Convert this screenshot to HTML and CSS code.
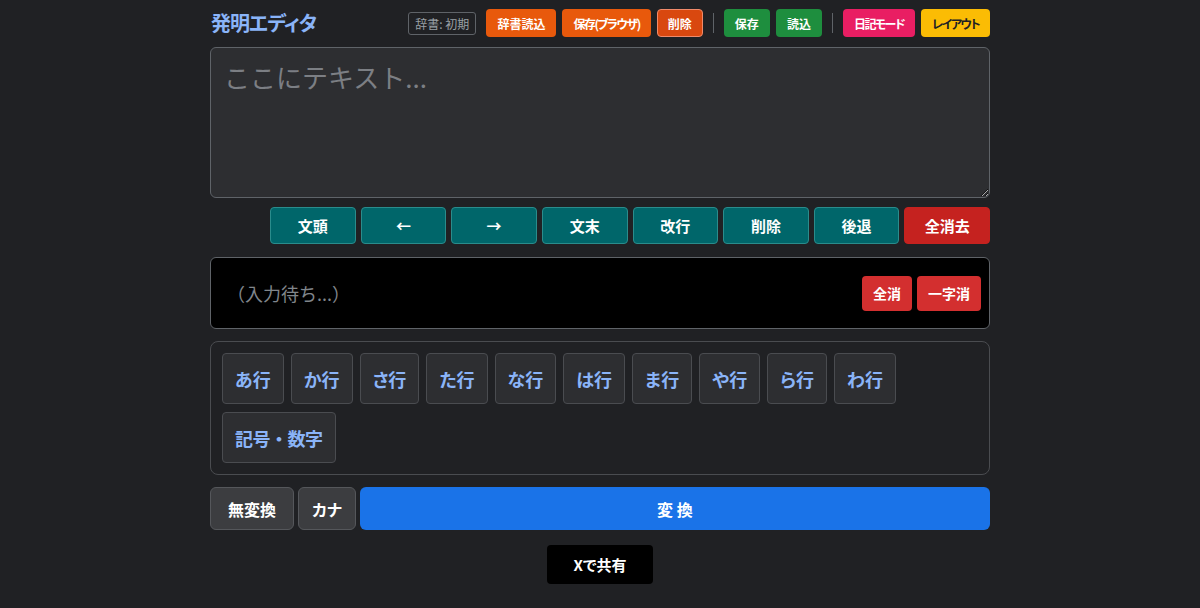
FILE: index.html
```html
<!DOCTYPE html>
<html lang="ja">
<head>
    <meta charset="UTF-8">
    <meta name="viewport" content="width=device-width, initial-scale=1.0">
    <title>発明エディタ</title>
    <link rel="stylesheet" href="styles.css">
</head>
<body>

<div class="app">
    <div class="header">
        <h1 class="title">発明エディタ</h1>
        <div class="toolbar">
            <span class="dict-label">辞書: 初期</span>
            <button class="tb orange">辞書読込</button>
            <button class="tb orange tight">保存(ブラウザ)</button>
            <button class="tb orange-outline">削除</button>
            <span class="sep"></span>
            <button class="tb green">保存</button>
            <button class="tb green">読込</button>
            <span class="sep"></span>
            <button class="tb pink tight">日記モード</button>
            <button class="tb yellow tight">レイアウト</button>
        </div>
    </div>

    <textarea class="editor" placeholder="ここにテキスト..."></textarea>

    <div class="nav-row">
        <button class="nav">文頭</button>
        <button class="nav">←</button>
        <button class="nav">→</button>
        <button class="nav">文末</button>
        <button class="nav">改行</button>
        <button class="nav">削除</button>
        <button class="nav">後退</button>
        <button class="nav danger">全消去</button>
    </div>

    <div class="input-box">
        <span class="waiting">（入力待ち...）</span>
        <div class="input-actions">
            <button class="small-red">全消</button>
            <button class="small-red">一字消</button>
        </div>
    </div>

    <div class="kana-panel">
        <button class="kana">あ行</button>
        <button class="kana">か行</button>
        <button class="kana">さ行</button>
        <button class="kana">た行</button>
        <button class="kana">な行</button>
        <button class="kana">は行</button>
        <button class="kana">ま行</button>
        <button class="kana">や行</button>
        <button class="kana">ら行</button>
        <button class="kana">わ行</button>
        <button class="kana symbols">記号・数字</button>
    </div>

    <div class="convert-row">
        <button class="conv grey">無変換</button>
        <button class="conv grey short">カナ</button>
        <button class="conv blue">変 換</button>
    </div>

    <div class="share-row">
        <button class="share">Xで共有</button>
    </div>
</div>

</body>
</html>
```

FILE: styles.css
```css
body {
    margin: 0;
    background-color: #202124;
    font-family: "Noto Sans CJK JP", "Noto Sans", sans-serif;
    font-feature-settings: "palt";
    color: #e8eaed;
}

button {
    font-family: inherit;
    font-feature-settings: "palt";
    cursor: pointer;
}

.app {
    width: 780px;
    margin: 0 auto;
    padding-top: 9px;
}

.header {
    display: flex;
    align-items: center;
    justify-content: space-between;
    height: 28px;
}

.title {
    margin: 0 0 0 1px;
    font-size: 20px;
    font-weight: bold;
    letter-spacing: -1px;
    color: #8ab4f8;
    line-height: 28px;
}

.toolbar {
    display: flex;
    align-items: center;
    gap: 6px;
}

.dict-label {
    height: 21px;
    line-height: 21px;
    padding: 0 6px;
    border: 1px solid #5f6368;
    border-radius: 3px;
    font-size: 12px;
    color: #9aa0a6;
    margin-right: 4px;
}

.tb {
    height: 28px;
    padding: 0 10px;
    border: 1px solid transparent;
    border-radius: 4px;
    font-size: 12px;
    font-weight: bold;
    color: #fff;
}

.tb.tight {
    letter-spacing: -1.5px;
}

.orange {
    background-color: #e8590c;
}

.orange-outline {
    background-color: #d9480f;
    border-color: #f08a6a;
}

.green {
    background-color: #1e8e3e;
}

.pink {
    background-color: #e91e63;
}

.yellow {
    background-color: #fbbc04;
    color: #202124;
}

.sep {
    width: 1px;
    height: 20px;
    background-color: #5f6368;
    margin: 0 4px;
}

.editor {
    display: block;
    box-sizing: border-box;
    width: 100%;
    height: 151px;
    margin-top: 10px;
    padding: 10px 13px;
    background-color: #2d2e31;
    border: 1px solid #5f6368;
    border-radius: 6px;
    color: #e8eaed;
    font-family: inherit;
    font-feature-settings: normal;
    font-size: 26px;
    resize: vertical;
}

.editor::placeholder {
    color: #7c7f84;
}

.nav-row {
    display: grid;
    grid-template-columns: repeat(8, 1fr);
    gap: 5px;
    margin-top: 9px;
    margin-left: 60px;
}

.nav {
    height: 37px;
    background-color: #00666a;
    border: 1px solid #2a8c8c;
    border-radius: 4px;
    color: #fff;
    font-size: 15px;
    font-weight: bold;
}

.nav.danger {
    background-color: #c5221f;
    border-color: #c5221f;
}

.input-box {
    display: flex;
    align-items: center;
    justify-content: space-between;
    box-sizing: border-box;
    height: 72px;
    margin-top: 13px;
    padding: 0 8px 0 16px;
    background-color: #000;
    border: 1px solid #5f6368;
    border-radius: 6px;
}

.waiting {
    font-size: 18px;
    color: #80868b;
    font-feature-settings: normal;
}

.input-actions {
    display: flex;
    gap: 5px;
}

.small-red {
    height: 35px;
    padding: 0 11px;
    background-color: #d32f2f;
    border: none;
    border-radius: 4px;
    color: #fff;
    font-size: 14px;
    font-weight: bold;
}

.kana-panel {
    display: flex;
    flex-wrap: wrap;
    gap: 8px 7px;
    box-sizing: border-box;
    margin-top: 12px;
    padding: 11px;
    border: 1px solid #4a4c50;
    border-radius: 8px;
}

.kana {
    height: 51px;
    padding: 0 12px;
    background-color: #2d2e31;
    border: 1px solid #4a4c50;
    border-radius: 4px;
    color: #8ab4f8;
    font-size: 18px;
    font-weight: bold;
}

.kana.symbols {
    font-feature-settings: normal;
    letter-spacing: -0.5px;
}

.convert-row {
    display: flex;
    gap: 4px;
    margin-top: 12px;
}

.conv {
    height: 43px;
    padding: 0 17px;
    border-radius: 6px;
    font-size: 16px;
    font-weight: bold;
    color: #fff;
}

.conv.short {
    padding: 0 13px;
}

.conv.grey {
    background-color: #3c3d40;
    border: 1px solid #55575b;
}

.conv.blue {
    flex: 1;
    background-color: #1a73e8;
    border: none;
}

.share-row {
    display: flex;
    justify-content: center;
    margin-top: 15px;
}

.share {
    height: 39px;
    padding: 0 26px;
    background-color: #000;
    border: none;
    border-radius: 4px;
    color: #fff;
    font-size: 15px;
    font-weight: bold;
}
```
